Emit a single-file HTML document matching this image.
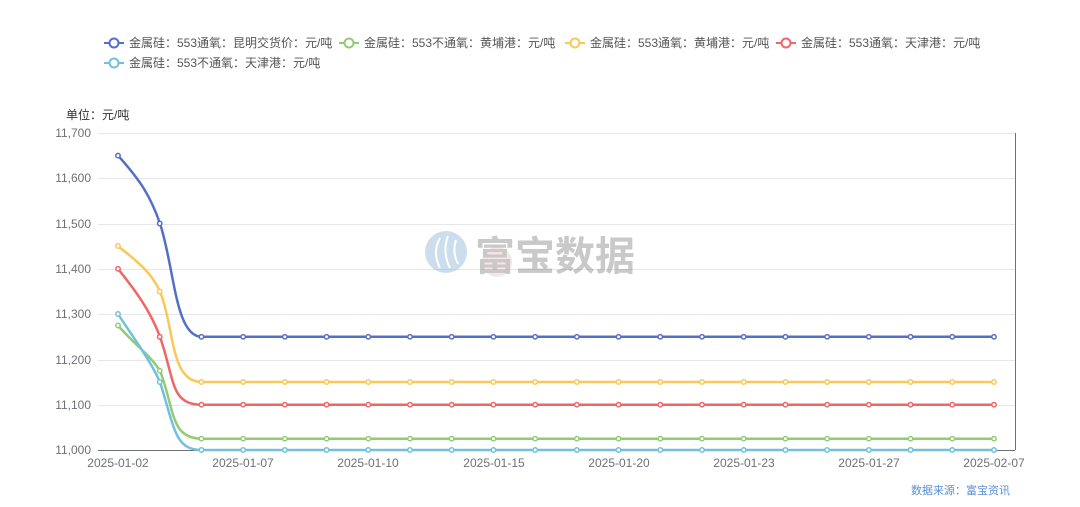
<!DOCTYPE html>
<html><head><meta charset="utf-8"><style>
body{margin:0;background:#fff;width:1080px;height:502px;overflow:hidden;font-family:"Liberation Sans","Noto Sans CJK SC",sans-serif;}
</style></head><body>
<svg width="1080" height="502" xmlns="http://www.w3.org/2000/svg" font-family="Liberation Sans, Noto Sans CJK SC, sans-serif">
<g font-size="12" fill="#555">
<g stroke-width="2" fill="#fff">
<line x1="104" y1="43" x2="124" y2="43" stroke="#5470c6"/><circle cx="114" cy="43" r="4.5" stroke="#5470c6"/>
<line x1="339" y1="43" x2="359" y2="43" stroke="#91cc75"/><circle cx="349" cy="43" r="4.5" stroke="#91cc75"/>
<line x1="565" y1="43" x2="585" y2="43" stroke="#fac858"/><circle cx="575" cy="43" r="4.5" stroke="#fac858"/>
<line x1="776" y1="43" x2="796" y2="43" stroke="#ee6666"/><circle cx="786" cy="43" r="4.5" stroke="#ee6666"/>
<line x1="104" y1="63" x2="124" y2="63" stroke="#73c0de"/><circle cx="114" cy="63" r="4.5" stroke="#73c0de"/>
</g>
<text x="129" y="47">金属硅：553通氧：昆明交货价：元/吨</text>
<text x="364" y="47">金属硅：553不通氧：黄埔港：元/吨</text>
<text x="590" y="47">金属硅：553通氧：黄埔港：元/吨</text>
<text x="801" y="47">金属硅：553通氧：天津港：元/吨</text>
<text x="129" y="67">金属硅：553不通氧：天津港：元/吨</text>
<text x="66" y="119" fill="#333">单位：元/吨</text>
</g>
<g stroke="#e6e6ee" stroke-width="1">
<line x1="98" y1="133.5" x2="1015" y2="133.5"/><line x1="98" y1="178.5" x2="1015" y2="178.5"/>
<line x1="98" y1="224.5" x2="1015" y2="224.5"/><line x1="98" y1="269.5" x2="1015" y2="269.5"/>
<line x1="98" y1="314.5" x2="1015" y2="314.5"/><line x1="98" y1="360.5" x2="1015" y2="360.5"/>
<line x1="98" y1="405.5" x2="1015" y2="405.5"/>
</g>
<line x1="98" y1="450.5" x2="1015" y2="450.5" stroke="#6e7079"/>
<line x1="1015.5" y1="133" x2="1015.5" y2="450" stroke="#6e7079"/>
<g font-size="12" fill="#6e7079" text-anchor="end">
<text x="91" y="137">11,700</text><text x="91" y="182">11,600</text><text x="91" y="228">11,500</text>
<text x="91" y="273">11,400</text><text x="91" y="318">11,300</text><text x="91" y="364">11,200</text>
<text x="91" y="409">11,100</text><text x="91" y="454">11,000</text>
</g>
<g font-size="12" fill="#6e7079" text-anchor="middle">
<text x="118" y="467">2025-01-02</text><text x="243" y="467">2025-01-07</text><text x="368" y="467">2025-01-10</text>
<text x="494" y="467">2025-01-15</text><text x="619" y="467">2025-01-20</text><text x="744" y="467">2025-01-23</text>
<text x="869" y="467">2025-01-27</text><text x="994" y="467">2025-02-07</text>
</g>
<g opacity="0.45">
<circle cx="446" cy="252" r="21" fill="#8fb8d8"/>
<path d="M440 238 q-8 14 0 30 M448 236 q-6 16 2 32 M456 240 q-4 12 2 24" stroke="#fff" stroke-width="2" fill="none"/>
<circle cx="497" cy="262" r="15" fill="#e8b0b0" opacity="0.7"/>
<text x="475" y="270" font-size="40" font-weight="bold" fill="#888" font-family="Noto Sans CJK SC, sans-serif">富宝数据</text>
</g>
<g fill="none" stroke-width="2.5">
<path d="M118 155.6 C140 180 150 195 160 223.5 C175 270 175 336.8 202 336.8 L994 336.8" stroke="#5470c6"/>
<path d="M118 246 C135 260 150 270 160 291.5 C175 330 170 382 202 382 L994 382" stroke="#fac858"/>
<path d="M118 268.8 C135 290 150 310 160 336.8 C175 380 170 404.7 202 404.7 L994 404.7" stroke="#ee6666"/>
<path d="M118 325.5 C135 345 150 355 160 370.7 C175 410 170 438.7 202 438.7 L994 438.7" stroke="#91cc75"/>
<path d="M118 314 C135 340 150 360 160 382 C175 430 175 450 202 450 L994 450" stroke="#73c0de"/>
</g>
<g fill="#fff" stroke-width="1.5" id="pts"></g>
<text x="1010" y="494" font-size="11" fill="#5b8fd6" text-anchor="end">数据来源：富宝资讯</text>
<script>
var g=document.getElementById('pts');
var S=[['#5470c6',[155.6,223.5],336.8],['#fac858',[246,291.5],382],['#ee6666',[268.8,336.8],404.7],['#91cc75',[325.5,370.7],438.7],['#73c0de',[314,382],450]];
S.forEach(function(s){for(var i=0;i<22;i++){var x=118+i*41.714;var y=i<2?s[1][i]:s[2];
var c=document.createElementNS('http://www.w3.org/2000/svg','circle');c.setAttribute('cx',x);c.setAttribute('cy',y);c.setAttribute('r',2.2);c.setAttribute('stroke',s[0]);g.appendChild(c);}});
</script>
</svg>
</body></html>
